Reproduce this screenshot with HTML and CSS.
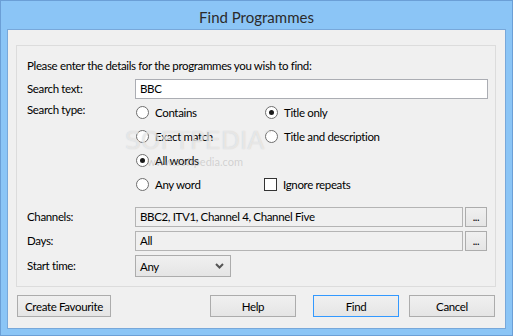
FILE: index.html
```html
<!DOCTYPE html>
<html lang="en">
<head>
    <meta charset="UTF-8">
    <title>Find Programmes</title>
    <link rel="stylesheet" href="styles.css">
</head>
<body>
    <div class="window">
        <div class="titlebar">Find Programmes</div>

        <div class="client">
            <div class="group">
                <p class="intro">Please enter the details for the programmes you wish to find:</p>

                <div class="row row-field">
                    <span class="label">Search text:</span>
                    <div class="textbox">BBC</div>
                </div>

                <div class="row row-type">
                    <span class="label label-top">Search type:</span>
                    <div class="options">
                        <div class="option"><span class="radio"></span>Contains</div>
                        <div class="option"><span class="radio checked"></span>Title only</div>
                        <div class="option"><span class="radio"></span>Exact match</div>
                        <div class="option"><span class="radio"></span>Title and description</div>
                        <div class="option"><span class="radio checked"></span>All words</div>
                        <div class="option"></div>
                        <div class="option"><span class="radio"></span>Any word</div>
                        <div class="option"><span class="check"></span>Ignore repeats</div>
                    </div>
                </div>

                <div class="row row-field row-channels">
                    <span class="label">Channels:</span>
                    <div class="textbox readonly">BBC2, ITV1, Channel 4, Channel Five</div>
                    <button class="btn dots">...</button>
                </div>

                <div class="row row-field row-days">
                    <span class="label">Days:</span>
                    <div class="textbox readonly">All</div>
                    <button class="btn dots">...</button>
                </div>

                <div class="row row-field row-start">
                    <span class="label">Start time:</span>
                    <div class="combo">
                        Any
                        <svg class="chevron" width="9" height="6" viewBox="0 0 9 6"><path d="M1 1 L4.5 4.5 L8 1" fill="none" stroke="#555" stroke-width="2"/></svg>
                    </div>
                </div>
            </div>

            <div class="buttons">
                <button class="btn wide">Create Favourite</button>
                <button class="btn push">Help</button>
                <button class="btn default">Find</button>
                <button class="btn">Cancel</button>
            </div>
        </div>

        <!-- watermark over the dialog -->
        <div class="watermark">SOFTPEDIA<sup>™</sup></div>
        <div class="watermark-url">www.softpedia.com</div>
    </div>
</body>
</html>
```

FILE: styles.css
```css
* {
    box-sizing: border-box;
}

body {
    margin: 0;
    font-family: Lato, "Noto Sans", sans-serif;
    font-size: 11.5px;
    letter-spacing: -0.35px;
    color: #000;
}

.window {
    position: relative;
    width: 513px;
    height: 336px;
    border: 1px solid #6b9fd6;
    background-color: #8bc5f6;
    padding: 0 6px 6px;
}

.titlebar {
    height: 28px;
    padding-top: 3px;
    display: flex;
    align-items: center;
    justify-content: center;
    font-size: 15px;
    letter-spacing: 0;
    color: #2b2b2b;
}

.client {
    height: 300px;
    border: 1px solid #78a8da;
    background-color: #f0f0f0;
    padding: 15px 10px 0 8px;
}

.group {
    width: 480px;
    border: 1px solid #dcdcdc;
    padding: 12px 6px 9px 10px;
}

.intro {
    margin: 0;
    line-height: 16px;
}

.row {
    display: flex;
}

.row-field {
    align-items: center;
    height: 20px;
    margin-top: 4px;
}

.row-field:first-of-type {
    margin-top: 5px;
}

.row-channels {
    margin-top: 11px;
}

.row-start {
    height: 22px;
}

.row-type {
    margin-top: 1px;
}

.label {
    width: 108px;
    flex-shrink: 0;
    line-height: 16px;
}

.label-top {
    padding-top: 2px;
}

.textbox {
    width: 353px;
    height: 20px;
    border: 1px solid #abadb3;
    background-color: #fff;
    padding: 0 4px;
    line-height: 18px;
}

.textbox.readonly {
    width: 328px;
    background-color: #f0f0f0;
    border-color: #b4b4b4;
}

.options {
    display: grid;
    grid-template-columns: 129px 160px;
    grid-auto-rows: 24px;
}

.option {
    display: flex;
    align-items: center;
    gap: 6px;
}

.radio {
    width: 13px;
    height: 13px;
    margin-left: 1px;
    border: 1px solid #6e6e6e;
    border-radius: 50%;
    background-color: #fff;
    display: flex;
    align-items: center;
    justify-content: center;
}

.radio.checked::after {
    content: "";
    width: 5px;
    height: 5px;
    border-radius: 50%;
    background-color: #1a1a1a;
}

.check {
    width: 13px;
    height: 13px;
    border: 1px solid #333;
    background-color: #fff;
}

.btn {
    font-family: inherit;
    font-size: 11.5px;
    letter-spacing: inherit;
    color: #000;
    height: 22px;
    width: 86px;
    padding: 0;
    white-space: nowrap;
    border: 1px solid #acacac;
    background: linear-gradient(#f0f0f0, #e5e5e5);
}

.dots {
    width: 22px;
    height: 20px;
    margin-left: 2px;
    line-height: 12px;
    font-size: 11px;
}

.combo {
    width: 96px;
    height: 22px;
    border: 1px solid #acacac;
    background: linear-gradient(#f0f0f0, #e5e5e5);
    padding: 0 6px 0 4px;
    display: flex;
    align-items: center;
    justify-content: space-between;
}

.buttons {
    display: flex;
    margin-top: 8px;
    padding-left: 1px;
    gap: 10px;
}

.btn.wide {
    width: 94px;
}

.btn.push {
    margin-left: auto;
    margin-right: 7px;
}

.btn.default {
    border-color: #3399ff;
}

.watermark {
    position: absolute;
    left: 124px;
    top: 125px;
    font-family: "DejaVu Sans", sans-serif;
    font-size: 25px;
    letter-spacing: 0;
    color: rgba(255, 255, 255, 0.55);
    text-shadow: 0 0 1px rgba(160, 160, 160, 0.5);
    pointer-events: none;
}

.watermark sup {
    font-size: 8px;
    vertical-align: 12px;
}

.watermark-url {
    position: absolute;
    left: 146px;
    top: 154px;
    font-size: 11px;
    letter-spacing: 0;
    color: rgba(170, 170, 170, 0.45);
    pointer-events: none;
}
```
